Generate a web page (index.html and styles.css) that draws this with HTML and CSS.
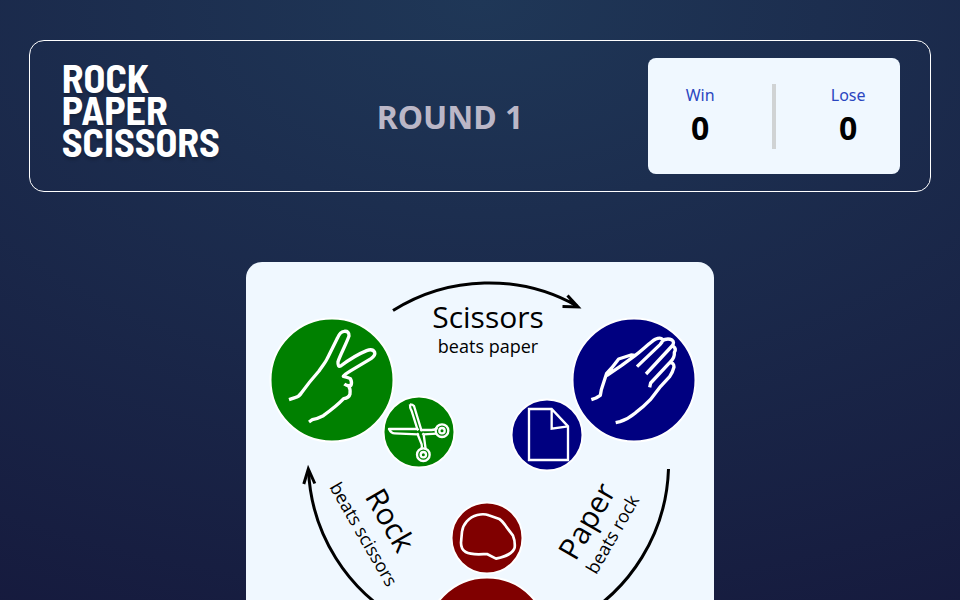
FILE: index.html
```html
<!DOCTYPE html>
<html lang="en">
<head>
<meta charset="utf-8">
<meta name="viewport" content="width=device-width, initial-scale=1">
<title>Rock Paper Scissors</title>
<link rel="stylesheet" href="styles.css">
</head>
<body>
<header class="header">
  <h1 class="logo">Rock<br>Paper<br>Scissors</h1>
  <h2 class="round">ROUND 1</h2>
  <section class="score">
    <div class="score-item">
      <span class="score-label">Win</span>
      <strong class="score-value">0</strong>
    </div>
    <div class="divider"></div>
    <div class="score-item">
      <span class="score-label">Lose</span>
      <strong class="score-value">0</strong>
    </div>
  </section>
</header>
<main class="card">
  <svg class="diagram" viewBox="246 262 468 456" role="img" aria-label="Rules of the game">
    <g class="arc">
      <path d="M393 310.500A180 180 0 0 1 577 306"/>
      <path d="M668.500 469A180 180 0 0 1 575 621"/>
      <path d="M403 621A180 180 0 0 1 308.500 470"/>
      <path class="head" d="M567.500 295.500L578 307L562.500 306.500M569 301L577 306"/>
      <path class="head" d="M303.800 484L308.300 469L314.800 483.500"/>
    </g>
    <g class="disc">
      <circle class="green" cx="332" cy="380" r="61.500"/>
      <circle class="green" cx="419" cy="432" r="35.500"/>
      <circle class="blue" cx="634" cy="380" r="61.500"/>
      <circle class="blue" cx="547" cy="435" r="35.500"/>
      <circle class="red" cx="487" cy="538" r="35.500"/>
      <circle class="red" cx="487" cy="639" r="61.500"/>
    </g>
    <g class="line" transform="translate(261 310) scale(.33333)">
      <path d="M84 269L102 263Q114 260 121 249C138 225 158 201 174 183C184 168 194 157 200 143L229 85Q237 65 249 64Q265 62 264 78C256 101 238 134 231 155Q230 172 239 168C263 150 290 133 317 122Q335 115 341 127Q344 136 330 146L266 184Q252 192 247 199Q261 202 268 206Q274 217 270 226Q260 230 250 222M263 229Q269 237 267 252Q264 264 248 266C229 286 205 304 187 317Q169 326 154 329L144 336"/>
    </g>
    <g class="line scissors" transform="translate(384 396) scale(.33333)">
      <path d="M78 25Q86 25 90 30L112 102L143 102Q153 102 160 96M78 25Q77 36 83 45L100 99L15 99Q21 112 32 112L101 115L113 145Q116 153 110 161M119 115L158 113M119 115L125 160"/>
      <path d="M100 99L103 103M112 102L109 104M101 115L104 112M119 115L115 112"/>
      <circle cx="174" cy="104" r="19"/>
      <circle cx="174" cy="104" r="8"/>
      <circle cx="118" cy="176" r="19"/>
      <circle cx="118" cy="176" r="8"/>
    </g>
    <g class="line" transform="translate(505 310) scale(.33333)">
      <path d="M259 269L273 264L286 256L289 239L305 190L320 174L341 147L378 135L391 136M305 197L349 167L390 137C413 120 436 96 451 88Q466 81 473 88Q473 96 465 104L396 170M470 93Q487 83 501 90Q510 97 501 108L423 192M505 109Q515 116 508 127Q510 143 494 158L437 219L434 232M494 158Q507 157 507 171Q503 187 494 200L467 229L436 269Q416 290 392 308Q369 327 345 335L332 338"/>
      <path class="page" d="M72 297H140L189 349V450H72ZM140 297V356L189 349"/>
    </g>
    <g class="line" transform="translate(420 490) scale(.33333)">
      <path class="stone" d="M126 125C129 103 146 82 172 75Q192 70 206 76L238 87Q246 92 258 109L279 137Q286 154 284 173C279 191 259 199 228 206L201 192C176 193 154 196 137 186Q123 178 123 158Z"/>
    </g>
    <g class="names">
      <text x="488" y="328">Scissors</text>
      <text transform="translate(381 525.500) rotate(60)">Rock</text>
      <text transform="translate(596 526.500) rotate(-60)">Paper</text>
    </g>
    <g class="rules">
      <text x="488" y="353">beats paper</text>
      <text transform="translate(358 537.500) rotate(60)">beats scissors</text>
      <text transform="translate(618 537.500) rotate(-60)">beats rock</text>
    </g>
  </svg>
</main>
</body>
</html>
```
FILE: styles.css
```css
* {
  box-sizing: border-box;
  margin: 0;
}

html {
  min-height: 100%;
  background: radial-gradient(134% 134% at 50% 0%, #1f3757 0%, #141539 100%) fixed;
}

body {
  font-family: "Noto Sans", "Open Sans", sans-serif;
  padding: 40px 0;
}

.header {
  display: flex;
  align-items: center;
  justify-content: space-between;
  width: 94%;
  margin: 0 auto;
  padding: 17px 30px;
  border: 1px solid #fff;
  border-radius: 15px;
}

.logo {
  align-self: flex-start;
  width: 192px;
  padding: 3px 2px;
  color: #fff;
  font-family: "Barlow Semi Condensed", "Liberation Sans Narrow", Roboto, sans-serif;
  font-size: 40px;
  font-weight: 700;
  line-height: 32px;
  text-transform: uppercase;
  text-shadow: 0 3px 3px rgba(0, 0, 0, .2);
}

.round {
  color: #bbb7c7;
  font-size: 32px;
  line-height: 46px;
  padding-top: 2px;
}

.score {
  display: flex;
  align-items: center;
  justify-content: space-between;
  width: 252px;
  height: 116px;
  padding: 0 34px;
  border-radius: 8px;
  background: #f0f8ff;
}

.score-item {
  display: flex;
  flex-direction: column;
  align-items: center;
  width: 36px;
}

.score-label {
  color: #2a46c0;
  font-size: 16px;
  line-height: 24px;
}

.score-value {
  font-size: 32px;
  line-height: 42px;
}

.divider {
  width: 4px;
  height: 65px;
  background: #d0d3d4;
}

.card {
  width: calc(100% - 32px);
  max-width: 468px;
  margin: 70px auto 0;
  border-radius: 16px;
  background: #f0f8ff;
}

.diagram {
  display: block;
  width: 100%;
  font-family: "Open Sans", "Noto Sans", sans-serif;
}

.arc path {
  fill: none;
  stroke: #000;
  stroke-width: 3;
}

.disc circle {
  stroke: #fff;
  stroke-width: 2;
}

.green { fill: #008000; }
.blue { fill: #000080; }
.red { fill: #800000; }

.line {
  fill: none;
  stroke: #fff;
  stroke-width: 10;
  stroke-linejoin: round;
}

.scissors { stroke-width: 7; }
.line .page { stroke-width: 7; stroke-linejoin: miter; }
.line .stone { stroke-width: 8; }

.names,
.rules {
  text-anchor: middle;
}

.names { font-size: 30px; }
.rules { font-size: 18px; }
```
